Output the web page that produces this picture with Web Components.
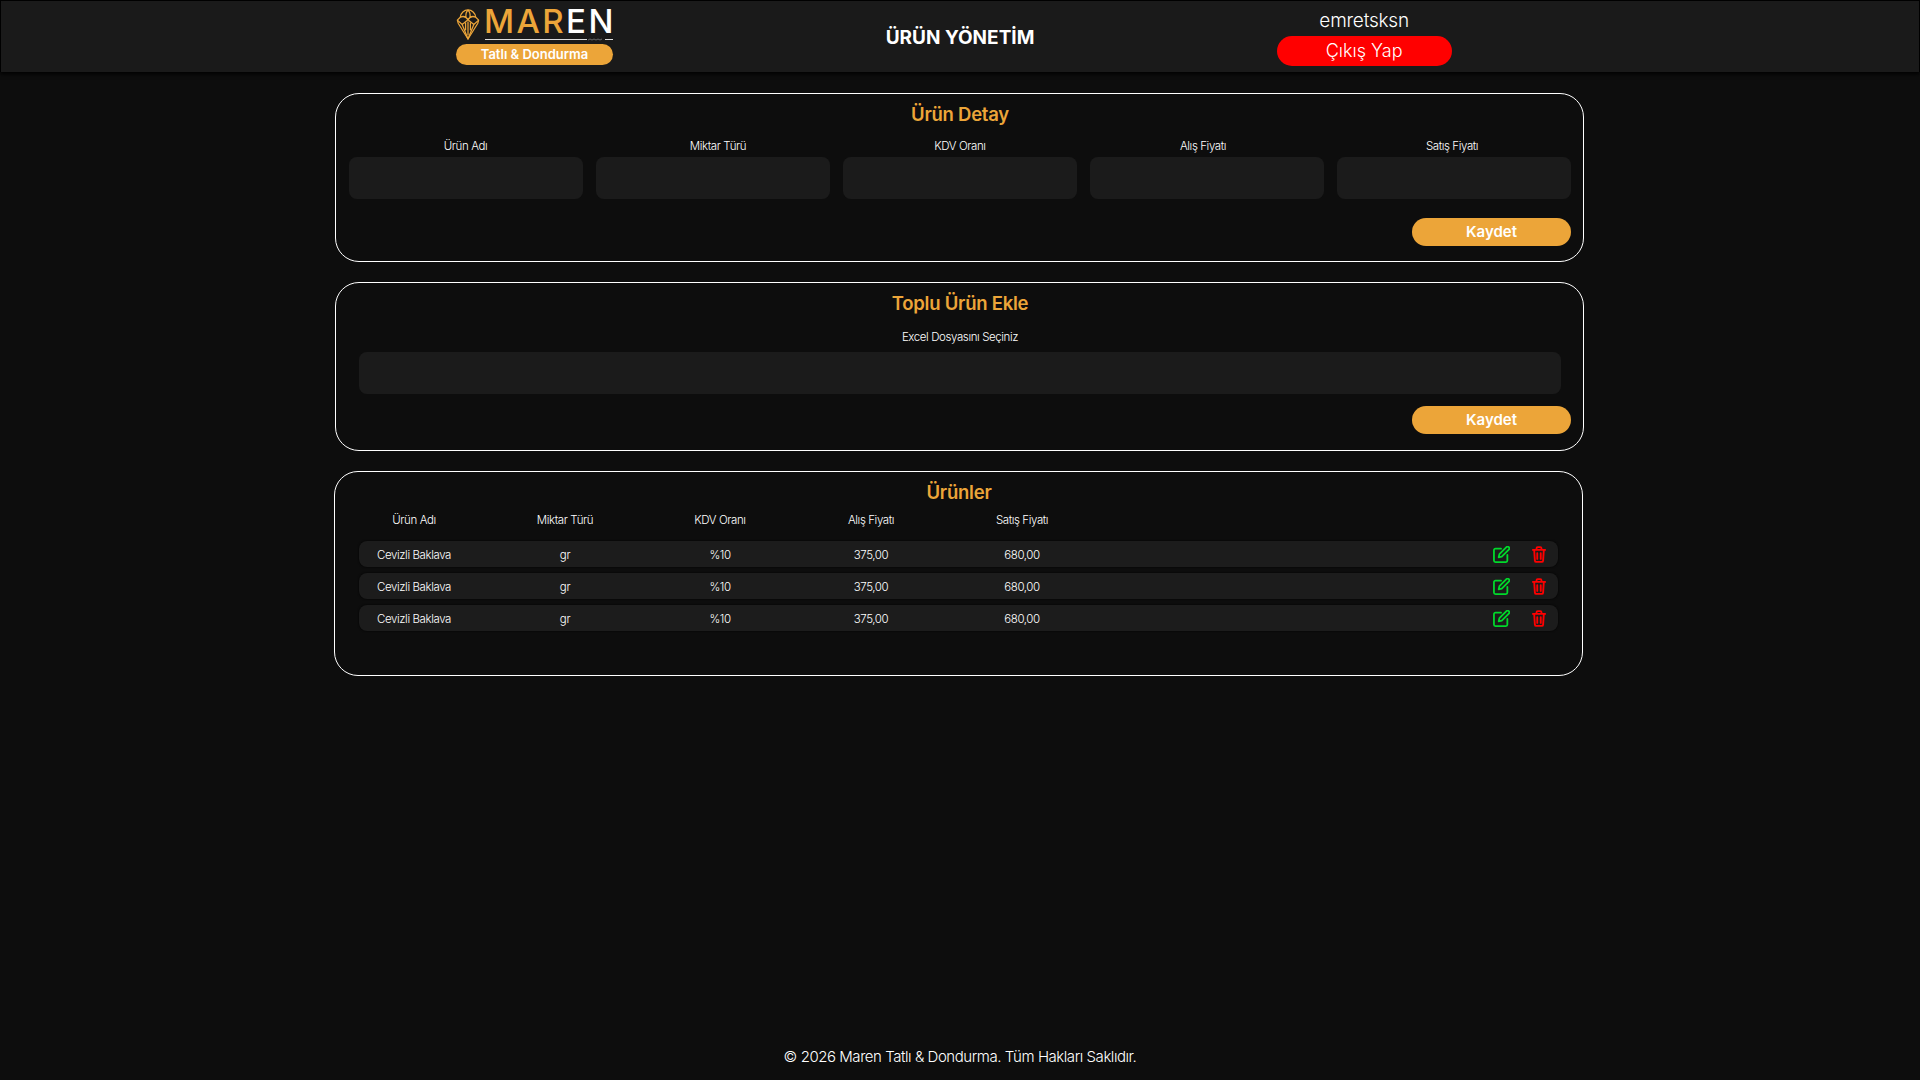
<!DOCTYPE html>
<html lang="tr">
<head>
<meta charset="utf-8">
<title>Ürün Yönetim</title>
<style>
  html, body { margin: 0; height: 100%; background: #0d0d0d; }
  body { font-family: Inter, "Noto Sans", sans-serif; color: #fff; }
</style>
</head>
<body>
<app-page>
  <app-header slot="header" page-title="ÜRÜN YÖNETİM" user="emretsksn"></app-header>

  <form-card heading="Ürün Detay">
    <field-row labels="Ürün Adı,Miktar Türü,KDV Oranı,Alış Fiyatı,Satış Fiyatı"></field-row>
    <save-button>Kaydet</save-button>
  </form-card>

  <form-card heading="Toplu Ürün Ekle">
    <file-field label="Excel Dosyasını Seçiniz"></file-field>
    <save-button>Kaydet</save-button>
  </form-card>

  <product-card heading="Ürünler"></product-card>

  <app-footer slot="footer">© 2026 Maren Tatlı &amp; Dondurma. Tüm Hakları Saklıdır.</app-footer>
</app-page>

<script>
// small helper so each component only has to give its markup
function shadowOf(el, html) {
  const shadow = el.attachShadow({ mode: "open" });
  shadow.innerHTML = html;
  return shadow;
}

// table columns, shared by the head and the rows
const COLUMNS = "110px 192px 118px 184px 118px";
const SMALL = "300 11.5px/20px Inter, sans-serif; letter-spacing: -0.4px";

customElements.define("app-page", class extends HTMLElement {
  constructor() {
    super();
    shadowOf(this, `
      <style>
        :host { display: flex; flex-direction: column; height: 1080px; overflow: hidden; }
        main { flex: 1; display: flex; flex-direction: column; gap: 20px; padding: 21px 336px 0 335px; min-height: 0; }
      </style>
      <slot name="header"></slot>
      <main><slot></slot></main>
      <slot name="footer"></slot>
    `);
  }
});

customElements.define("app-header", class extends HTMLElement {
  constructor() {
    super();
    const title = this.getAttribute("page-title");
    const user = this.getAttribute("user");
    shadowOf(this, `
      <style>
        :host {
          display: grid; grid-template-columns: 1fr 1fr 1fr; align-items: center;
          height: 72px; box-sizing: border-box; background: #1a1a1a;
          border: 1px solid #000; border-bottom: none; box-shadow: 0 2px 4px #000;
        }
        .brand { display: flex; flex-direction: column; width: 157px; margin-left: 455px; }
        .mark { display: flex; align-items: flex-start; height: 35px; }
        .mark svg { flex: none; margin: 0 5px 0 0; }
        .word { position: relative; height: 35px; width: 128px; }
        .name { display: block; font: 500 33px/24px Inter, sans-serif; letter-spacing: 2.4px; margin-left: -1px; color: #eca539; white-space: nowrap; }
        .name b { font-weight: 500; color: #fff; }
        .rule { position: absolute; left: 0; right: 0; top: 29px; display: block; }
        .pill {
          height: 21px; border-radius: 11px; background: #eca539; color: #fff;
          font: 600 13px/21px Inter, sans-serif; text-align: center;
        }
        h1 { margin: 1px 0 0; font: 700 19px/1 Inter, sans-serif; text-align: center; color: #fff; }
        .user { justify-self: start; margin-left: -3px; display: flex; flex-direction: column; align-items: center; gap: 3px; }
        .user span { font: 300 19px/25px Inter, sans-serif; letter-spacing: -0.2px; color: #fff; }
        .logout {
          width: 175px; height: 30px; border: 0; border-radius: 15px; background: #f00; color: #fff;
          font: 300 18px/30px Inter, sans-serif; padding: 0;
        }
      </style>
      <div class="brand">
        <div class="mark">
          <svg width="24" height="31" viewBox="0 0 24 32" fill="none" stroke="#eca539" stroke-width="1.3" stroke-linejoin="round">
            <path d="M2 15 1 11.5 4 8.5C4.500 4 8 1 12 1s7.500 3 8 7.500l3 3L22 15 12 31Z"/>
            <path d="M4 8.500C7 7 10 8 12 11c2-3 5-4 8-2.500M12 1C10 3 9.500 6 10 9M12 1c2 2 2.500 5 2 8M1 11.500 6 16l6-5 6 5 5-4.500"/>
            <path d="M6 16 12 31 18 16M9.500 14v8M14.500 14v8M12 13v14"/>
          </svg>
          <div class="word">
            <span class="name">MAR<b>EN</b></span>
            <svg class="rule" width="128" height="3" viewBox="0 0 128 3" fill="none" stroke="#ddd">
              <path d="M0 1.500H102M120 1.500H128"/>
              <path d="M103 2l2-1 2 1 2-1 2 1 2-1 2 1 2-1" stroke="#888" stroke-width=".7"/>
            </svg>
          </div>
        </div>
        <div class="pill">Tatlı &amp; Dondurma</div>
      </div>
      <h1>${title}</h1>
      <div class="user">
        <span>${user}</span>
        <button class="logout">Çıkış Yap</button>
      </div>
    `);
  }
});

customElements.define("card-frame", class extends HTMLElement {
  constructor() {
    super();
    shadowOf(this, `
      <style>
        :host {
          display: block; box-sizing: border-box; border: 1.5px solid #fff; border-radius: 24px;
          background: #0d0d0d; padding: 5px 12px 15px 13px;
        }
        h2 { margin: 0; font: 600 18.5px/30px Inter, sans-serif; letter-spacing: -0.25px; color: #eca539; text-align: center; }
      </style>
      <h2></h2>
      <slot></slot>
    `);
  }
  set heading(text) { this.shadowRoot.querySelector("h2").textContent = text; }
});

customElements.define("form-card", class extends HTMLElement {
  constructor() {
    super();
    shadowOf(this, `
      <style>
        :host { display: block; height: 169px; }
        card-frame { height: 100%; }
      </style>
      <card-frame><slot></slot></card-frame>
    `);
    this.shadowRoot.querySelector("card-frame").heading = this.getAttribute("heading");
  }
});

customElements.define("field-row", class extends HTMLElement {
  constructor() {
    super();
    const labels = this.getAttribute("labels").split(",");
    shadowOf(this, `
      <style>
        :host { display: block; margin-bottom: 19px; }
        .labels { display: grid; grid-template-columns: 233px 272px 212px 274px 224px; height: 20px; margin: 7px 0 1px; }
        .labels span { font: ${SMALL}; color: #fff; text-align: center; }
        .inputs { display: grid; grid-template-columns: repeat(5, 1fr); gap: 13px; }
        .inputs div { height: 42px; border-radius: 8px; background: #1b1b1b; }
      </style>
      <div class="labels">${labels.map((l) => `<span>${l}</span>`).join("")}</div>
      <div class="inputs">${labels.map(() => "<div></div>").join("")}</div>
    `);
  }
});

customElements.define("file-field", class extends HTMLElement {
  constructor() {
    super();
    shadowOf(this, `
      <style>
        :host { display: block; margin-bottom: 12px; text-align: center; }
        label { display: block; font: ${SMALL}; color: #fff; margin: 9px 0 5px; }
        .input { height: 42px; margin: 0 10px; border-radius: 8px; background: #1b1b1b; }
      </style>
      <label>${this.getAttribute("label")}</label>
      <div class="input"></div>
    `);
  }
});

customElements.define("save-button", class extends HTMLElement {
  constructor() {
    super();
    shadowOf(this, `
      <style>
        :host { display: flex; justify-content: flex-end; }
        button {
          width: 159px; height: 28px; padding: 0; border: 0; border-radius: 14px;
          background: #eca539; color: #fff; font: 600 15px/28px Inter, sans-serif;
        }
      </style>
      <button><slot></slot></button>
    `);
  }
});

customElements.define("product-row", class extends HTMLElement {
  constructor() {
    super();
    const cells = ["name", "unit", "vat", "buy", "sell"].map((k) => `<span>${this.getAttribute(k)}</span>`).join("");
    shadowOf(this, `
      <style>
        :host {
          display: grid; grid-template-columns: ${COLUMNS} 1fr; align-items: center;
          height: 26px; box-sizing: border-box; border-radius: 8px; background: #1c1c1c;
          box-shadow: 0 0 2px #000; font: ${SMALL}; color: #fff;
        }
        span { text-align: center; padding-top: 2px; }
        .actions { display: flex; justify-content: flex-end; gap: 22px; padding-right: 12px; align-items: center; }
        svg { display: block; }
      </style>
      ${cells}
      <div class="actions">
        <svg width="17" height="17" viewBox="0 0 18 18" fill="none" stroke="#00d92b" stroke-width="1.9" stroke-linecap="round" stroke-linejoin="round">
          <path d="M8.500 2.800H2.600A1.600 1.600 0 0 0 1 4.400v11A1.600 1.600 0 0 0 2.600 17h11a1.600 1.600 0 0 0 1.600-1.600V9.500"/>
          <path d="M14.200 1.300a1.700 1.700 0 0 1 2.500 2.500L9.300 11.200l-3.300.8.800-3.300Z"/>
        </svg>
        <svg width="14" height="17" viewBox="0 0 16 19" fill="none" stroke="#f00" stroke-width="2.100" stroke-linecap="round" stroke-linejoin="round">
          <path d="M1 4.200h14M5.200 4V2.300A1.300 1.300 0 0 1 6.500 1h3a1.300 1.300 0 0 1 1.300 1.300V4"/>
          <path d="M2.500 4.500 3.300 16.500A1.600 1.600 0 0 0 4.900 18h6.200a1.600 1.600 0 0 0 1.600-1.500l.8-12"/>
          <path d="M6 8v6.500M10 8v6.500"/>
        </svg>
      </div>
    `);
  }
});

customElements.define("product-card", class extends HTMLElement {
  constructor() {
    super();
    const row = '<product-row name="Cevizli Baklava" unit="gr" vat="%10" buy="375,00" sell="680,00"></product-row>';
    shadowOf(this, `
      <style>
        :host { display: block; height: 205px; margin: 0 1px 0 -1px; }
        card-frame { height: 100%; }
        .wrap { padding: 3px 12px 0 11px; }
        .heads { display: grid; grid-template-columns: ${COLUMNS}; height: 20px; margin: 0 0 11px; }
        .heads span { font: ${SMALL}; text-align: center; color: #fff; }
        .rows { display: flex; flex-direction: column; gap: 6px; }
      </style>
      <card-frame>
        <div class="wrap">
          <div class="heads">
            <span>Ürün Adı</span><span>Miktar Türü</span><span>KDV Oranı</span><span>Alış Fiyatı</span><span>Satış Fiyatı</span>
          </div>
          <div class="rows">${row}${row}${row}</div>
        </div>
      </card-frame>
    `);
    this.shadowRoot.querySelector("card-frame").heading = this.getAttribute("heading");
  }
});

customElements.define("app-footer", class extends HTMLElement {
  constructor() {
    super();
    shadowOf(this, `
      <style>
        :host { display: block; height: 33px; text-align: center; font: 300 15px/20px Inter, sans-serif; letter-spacing: -0.45px; color: #fff; }
      </style>
      <slot></slot>
    `);
  }
});
</script>
</body>
</html>
